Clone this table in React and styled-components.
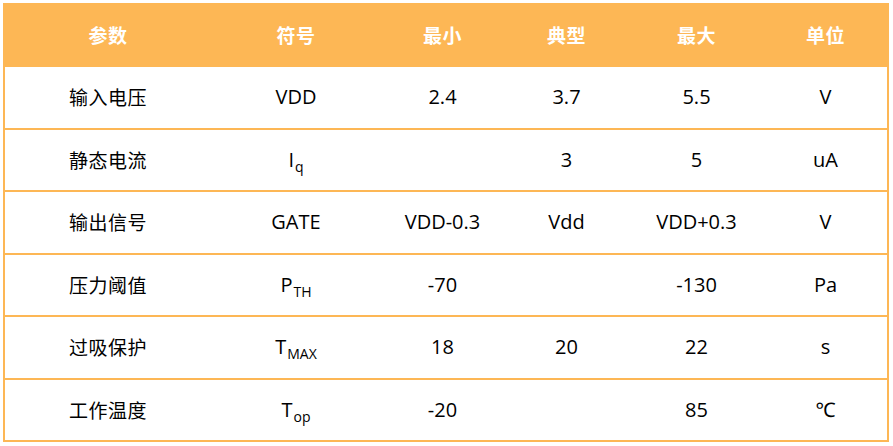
import React from 'react';
import styled, { createGlobalStyle } from 'styled-components';

const ORANGE = '#FDB755';

const GlobalStyle = createGlobalStyle`
  html, body {
    margin: 0;
    padding: 0;
    background: #FFFFFF;
  }
  body {
    font-family: "Open Sans", "Noto Sans", "Noto Sans CJK SC", sans-serif;
  }
`;

const Page = styled.div`
  width: 893px;
  height: 446px;
  padding: 3px 0 0 3px;
  box-sizing: border-box;
`;

const Table = styled.div`
  width: 886px;
  height: 439px;
  box-sizing: border-box;
  display: flex;
  flex-direction: column;
  border-left: 2px solid ${ORANGE};
  border-right: 2px solid ${ORANGE};
`;

const Row = styled.div`
  display: grid;
  grid-template-columns: 206px 170px 123px 125px 135px 1fr;
  align-items: center;
  box-sizing: border-box;
  flex: ${(p) => (p.$head ? '0 0 64px' : '1 1 0')};
  background: ${(p) => (p.$head ? ORANGE : '#FFFFFF')};
  border-bottom: ${(p) => (p.$head ? 'none' : `2px solid ${ORANGE}`)};
`;

const Cell = styled.div`
  text-align: center;
  font-size: ${(p) => (p.$cjk ? '19px' : '20px')};
  line-height: 26px;
  color: ${(p) => (p.$head ? '#FFFFFF' : '#000000')};
  font-weight: ${(p) => (p.$head ? 700 : 400)};
  letter-spacing: ${(p) => (p.$cjk ? '0.5px' : '0')};
  font-family: ${(p) =>
    p.$cjk
      ? '"Noto Sans CJK SC", sans-serif'
      : '"Open Sans", "Noto Sans", "Noto Sans CJK SC", sans-serif'};
`;

const Sub = styled.sub`
  font-size: 14px;
  vertical-align: -5px;
  line-height: 0;
  margin-left: 1px;
`;

const header = ['参数', '符号', '最小', '典型', '最大', '单位'];

const rows = [
  ['输入电压', <>VDD</>, '2.4', '3.7', '5.5', 'V'],
  ['静态电流', <>I<Sub>q</Sub></>, '', '3', '5', 'uA'],
  ['输出信号', <>GATE</>, 'VDD-0.3', 'Vdd', 'VDD+0.3', 'V'],
  ['压力阈值', <>P<Sub>TH</Sub></>, '-70', '', '-130', 'Pa'],
  ['过吸保护', <>T<Sub>MAX</Sub></>, '18', '20', '22', 's'],
  ['工作温度', <>T<Sub>op</Sub></>, '-20', '', '85', '℃'],
];

export default function App() {
  return (
    <>
      <GlobalStyle />
      <Page>
        <Table>
          <Row $head>
            {header.map((h) => (
              <Cell key={h} $head $cjk>
                {h}
              </Cell>
            ))}
          </Row>
          {rows.map((r, i) => (
            <Row key={i}>
              {r.map((c, j) => (
                <Cell key={j} $cjk={j === 0}>
                  {c}
                </Cell>
              ))}
            </Row>
          ))}
        </Table>
      </Page>
    </>
  );
}
